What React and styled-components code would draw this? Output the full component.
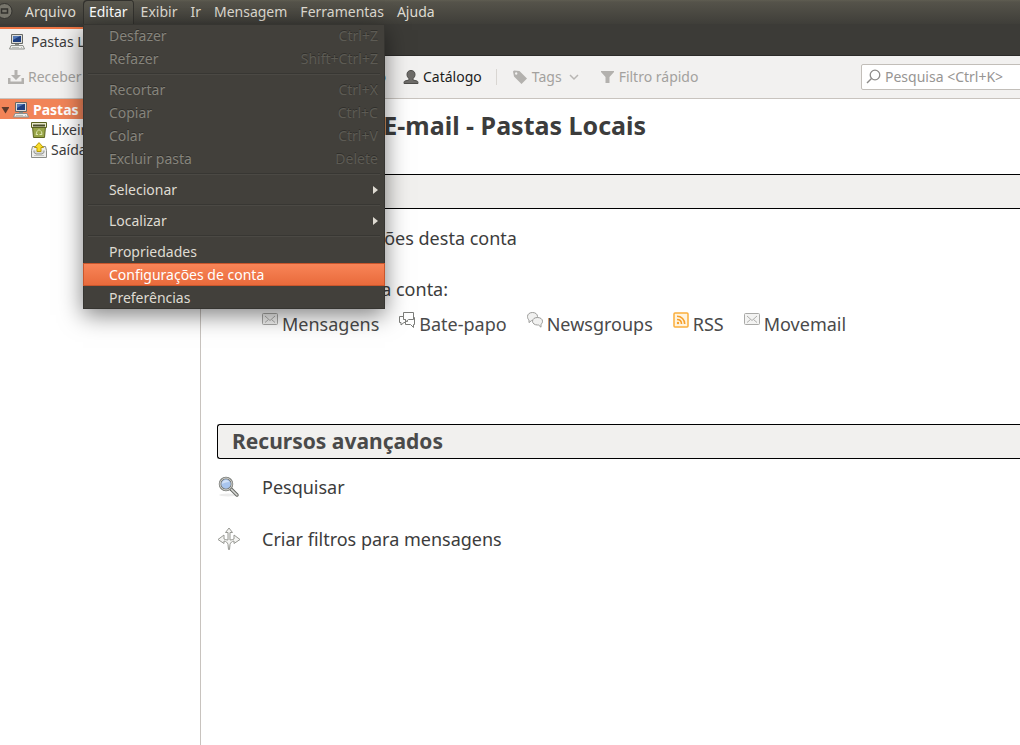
import React from 'react';
import styled, { createGlobalStyle, css } from 'styled-components';

const GlobalStyle = createGlobalStyle`
	* {
		box-sizing: border-box;
	}

	body {
		margin: 0;
		background: #fff;
		color: #3c3c3c;
		font-family: 'Noto Sans', 'Open Sans', sans-serif;
		font-size: 14px;
		line-height: 20px;
	}

	button,
	input {
		font: inherit;
		color: inherit;
	}

	svg {
		display: block;
		flex: none;
	}
`;

const Window = styled.div`
	display: flex;
	flex-direction: column;
	min-height: 100vh;
	overflow: hidden;
`;

const plainButton = css`
	display: flex;
	align-items: center;
	padding: 0;
	border: 0;
	background: none;
	white-space: nowrap;
`;

const MenuBar = styled.nav`
	display: flex;
	gap: 1px;
	height: 24px;
	background: linear-gradient(#5f5d51, #55534a 2px, #3f3e39);
	color: #dfdbd2;
`;

const Restore = styled.button`
	${plainButton}
	width: 18px;
	overflow: hidden;
`;

const MenuHolder = styled.div`
	position: relative;
	display: flex;
`;

const MenuTitle = styled.button`
	${plainButton}
	padding: 0 6px;

	${props =>
		props.$open &&
		css`
			border-radius: 4px 4px 0 0;
			background: linear-gradient(#5b594f, #45443e);
			box-shadow: inset 1px 1px #33322e, inset -1px 0 #33322e;
			color: #fff;
		`}
`;

const Menu = styled.div`
	position: absolute;
	z-index: 1;
	top: 24px;
	left: 0;
	width: 302px;
	background: #42403b;
	box-shadow: inset 0 0 0 1px #363531, 0 6px 22px rgba(0, 0, 0, 0.5);
`;

const MenuItem = styled.button`
	${plainButton}
	justify-content: space-between;
	width: 100%;
	height: 23px;
	padding: 0 7px 0 26px;
	color: #dfdbd2;

	&:disabled {
		color: #86847c;
		text-shadow: 0 -1px #302f2b;
	}

	${props =>
		props.$active &&
		css`
			background: linear-gradient(#f98659, #e8693a);
			box-shadow: inset 0 0 0 1px #c9562c;
			color: #fff;
		`}
`;

const Shortcut = styled.span`
	color: #5d5b54;
`;

const Arrow = styled.span`
	border: 4px solid transparent;
	border-right: 0;
	border-left: 5px solid #dfdbd2;
`;

const Separator = styled.hr`
	height: 8px;
	margin: 0 5px;
	border: 0;
	background: linear-gradient(#383733, #383733) 0 3px / 100% 1px no-repeat,
		linear-gradient(#4b4944, #4b4944) 0 4px / 100% 1px no-repeat;
`;

const TabStrip = styled.div`
	display: flex;
	height: 32px;
	padding-top: 3px;
	background: #3c3b37;
	box-shadow: inset 0 -1px #2c2b29;
`;

const Tab = styled.button`
	${plainButton}
	gap: 6px;
	width: 200px;
	padding: 0 9px 2px;
	border-top: 2px solid #f07746;
	background: #f2f1f0;
`;

const Toolbar = styled.div`
	display: flex;
	align-items: center;
	height: 43px;
	padding-left: 8px;
	border-bottom: 1px solid #c8c3be;
	background: #f2f1f0;
`;

const ToolButton = styled.button`
	${plainButton}
	gap: 4px;
	color: #1c1c1c;

	&:disabled {
		color: #a3a19e;
	}
`;

const MailTools = styled.div`
	display: flex;
	justify-content: space-between;
	width: 378px;
	margin-right: 17px;
`;

const TagTools = styled.div`
	display: flex;
	gap: 20px;
`;

const Divider = styled.span`
	width: 1px;
	height: 16px;
	margin: 0 15px 0 14px;
	background: #d9d6d2;
`;

const Search = styled.label`
	display: flex;
	align-items: center;
	gap: 4px;
	width: 164px;
	height: 26px;
	margin-left: auto;
	margin-right: -5px;
	padding-left: 4px;
	border: 1px solid #c2beb9;
	border-radius: 2px;
	background: #fff;

	input {
		flex: 1;
		min-width: 0;
		padding: 0;
		border: 0;
		outline: 0;
		background: none;
	}

	input::placeholder {
		color: #979593;
		opacity: 1;
	}
`;

const Body = styled.div`
	display: flex;
	flex: 1;
`;

const Folders = styled.aside`
	width: 201px;
	border-right: 1px solid #c8c3be;
`;

const Folder = styled.button`
	${plainButton}
	gap: 4px;
	width: 100%;
	height: 20px;
	padding-top: 2px;
	padding-left: ${props => (props.$root ? 0 : 31)}px;
	background: ${props => (props.$root ? '#f18458' : 'none')};
	color: ${props => (props.$root ? '#fff' : 'inherit')};
	font-weight: ${props => (props.$root ? 700 : 400)};
`;

const Content = styled.main`
	flex: 1;
	min-width: 0;
	padding: 10px 0 0 16px;
	font-size: 18px;
	line-height: 24px;
`;

const Title = styled.h1`
	margin: 0 0 33px;
	padding-left: 5px;
	font-size: 25px;
	line-height: 32px;
	white-space: nowrap;
`;

const Section = styled.section`
	margin-bottom: 88px;
`;

const SectionTitle = styled.h2`
	height: 35px;
	margin: 0;
	padding-left: 14px;
	border: 1px solid #000;
	border-right: 0;
	border-radius: 3px 0 0 3px;
	background: #f1f0ee;
	color: #4a4a4a;
	font-size: 21px;
	line-height: 32px;
`;

const Action = styled.a`
	display: grid;
	grid-template-columns: 45px auto;
	align-items: center;
	justify-content: start;
	margin-top: ${props => props.$space}px;
	color: inherit;
	text-decoration: none;
	white-space: nowrap;
`;

const Label = styled.p`
	margin: 27px 0 0 45px;
`;

const AccountTypes = styled.div`
	display: flex;
	gap: 20px;
	margin: 11px 0 0 45px;
`;

const AccountLink = styled.a`
	display: flex;
	gap: 4px;
	color: #4a4a4a;
	text-decoration: none;
`;

const ComputerIcon = () => (
	<svg width="16" height="16" viewBox="0 0 16 16">
		<path d="M2.500.5h11v9h-11z" fill="#dcdcd8" stroke="#666864" />
		<path d="M4 2h8v6H4z" fill="#1f3f80" />
		<path d="M4 2h7L4 6z" fill="#5478b5" />
		<path d="M6 10h4v1H6z" fill="#888a85" />
		<path d="M2 11.500h12l1.500 3.500H.5z" fill="#eeeeec" stroke="#8d8f8a" />
		<path d="M3 13.500h7M12 13.500h1" stroke="#babdb6" />
	</svg>
);

const TrashIcon = () => (
	<svg width="16" height="16" viewBox="0 0 16 16">
		<path d="M1.500 4.500h13l-1 11h-11z" fill="#98a548" stroke="#5b6320" />
		<path d="M.5.500h15v5H.5z" fill="#e7e8c9" stroke="#5b6320" />
		<path d="M2 3.500h12" stroke="#4a4f2b" strokeWidth="2" />
		<path d="M6 9.500l2-2 2 2M10.500 9.500l.5 3H8.500M7 12.500H5l1-3" fill="none" stroke="#dfe6b0" />
	</svg>
);

const OutboxIcon = () => (
	<svg width="16" height="16" viewBox="0 0 16 16">
		<path d="M1.500 4.500h13l1 4v7H.5v-7z" fill="#eeeeec" stroke="#8b8d88" />
		<path d="M3 8.500v2l2 1.500h6l2-1.500v-2" fill="#d6d7d3" stroke="#8f918c" />
		<path d="M3 13.500h10" stroke="#c5c7c2" />
		<path d="M8 .6l4.500 4.900h-2.500v4H6v-4H3.500z" fill="#f8dc2c" stroke="#b99b05" />
	</svg>
);

const ReceiveIcon = () => (
	<svg width="16" height="16" viewBox="0 0 16 16" fill="#b3b1ae">
		<path d="M6.500 1h3v5H13l-5 5-5-5h3.500z" />
		<path d="M0 9h2.500v3.500h11V9H16v6H0z" />
	</svg>
);

const PersonIcon = () => (
	<svg width="16" height="16" viewBox="0 0 16 16">
		<path
			d="M8 1.500c2.500 0 4 1.500 4 4 0 1.800-.8 3.200-2 4v1.500l4 1c.8.300 1 .8 1 2.500H1c0-1.700.2-2.200 1-2.500l4-1V9.500c-1.200-.8-2-2.200-2-4 0-2.500 1.500-4 4-4z"
			fill="#6e6c69"
			stroke="#4e4d4a"
		/>
	</svg>
);

const TagIcon = () => (
	<svg width="16" height="16" viewBox="0 0 16 16">
		<path
			d="M1 2.500L2 1.500l5.500.5L15 9.500 9.500 15 2 7.500zM3 4.500a1.200 1.200 0 1 0 2.400 0 1.200 1.200 0 1 0-2.400 0z"
			fill="#b3b1ae"
			fillRule="evenodd"
		/>
	</svg>
);

const ChevronIcon = () => (
	<svg width="14" height="10" viewBox="0 0 14 10">
		<path d="M4 3l4 4 4-4" fill="none" stroke="#b8b6b3" strokeWidth="1.500" />
	</svg>
);

const FunnelIcon = () => (
	<svg width="15" height="16" viewBox="0 0 15 16">
		<path d="M1 2h13v1L9.500 8v6h-4V8L1 3z" fill="#b3b1ae" />
	</svg>
);

const LensIcon = () => (
	<svg width="15" height="16" viewBox="0 0 15 16" fill="none" stroke="#8d8b89">
		<circle cx="9" cy="6" r="4.800" strokeWidth="1.300" />
		<path d="M5.500 9.500L1 14" strokeWidth="1.500" />
	</svg>
);

const EnvelopeIcon = () => (
	<svg width="16" height="14" viewBox="0 0 16 14">
		<rect x=".5" y="1.500" width="15" height="11" rx="1" fill="#f3f3f2" stroke="#a9a9a7" />
		<path d="M3 4l5 4.500L13 4M3 10.500L6.500 7.500M13 10.500L9.500 7.500" fill="none" stroke="#aeaeac" />
	</svg>
);

const ChatIcon = () => (
	<svg width="16" height="16" viewBox="0 0 16 16" fill="#fff" stroke="#7b7c79">
		<path d="M8.500 5.500h7v7h-1v3l-3-3h-5v-3h2z" />
		<path d="M4.500.5h10v7h-5l-3 2.500V7.500h-2z" />
		<path d="M4.500 4.500h-4v6h1.500v2.500l3-2.500h1.500V7.500h-2z" />
	</svg>
);

const NewsIcon = () => (
	<svg width="16" height="16" viewBox="0 0 16 16" fill="#f1f1f0" stroke="#9b9b99">
		<path d="M5.500.5c3 0 5 1.700 5 4s-2 4-5 4l-1 .1-2.500 2V8C.9 7.200.5 5.800.5 4.500c0-2.300 2-4 5-4z" />
		<path d="M10.500 5.500c3 0 5 1.600 5 3.700 0 1.400-.5 2.400-1.500 3v3l-2.500-2.200h-1c-3 0-5-1.600-5-3.800s2-3.700 5-3.700z" />
	</svg>
);

const RssIcon = () => (
	<svg width="16" height="16" viewBox="0 0 16 16">
		<rect x="1" y="1" width="14" height="14" rx="1" fill="#fff4df" stroke="#fbae3c" strokeWidth="1.500" />
		<g fill="none" stroke="#f7a02b" strokeWidth="1.600">
			<path d="M4 4.300c4.500 0 7.700 3.200 7.700 7.700M4 7.500c2.800 0 4.500 1.700 4.500 4.500" />
		</g>
		<circle cx="5" cy="11" r="1.200" fill="#f7a02b" />
	</svg>
);

const MagnifierIcon = () => (
	<svg width="24" height="24" viewBox="0 0 24 24">
		<ellipse cx="11" cy="20" rx="9" ry="1.500" fill="#ececec" />
		<path d="M14 14l6 6" stroke="#666864" strokeWidth="3.500" strokeLinecap="round" />
		<path d="M14 14l6 6" stroke="#d9dad7" strokeWidth="1.500" strokeLinecap="round" />
		<circle cx="9" cy="9" r="6" fill="#a9c5ee" stroke="#777975" strokeWidth="2.500" />
		<circle cx="9" cy="9" r="6" fill="none" stroke="#d6d7d4" />
		<path d="M5 9c0-3 2-4 4-4 1.500 0 3 1 3.500 2C9 7 7 8 5 9z" fill="#d2e1f7" />
	</svg>
);

const FilterIcon = () => (
	<svg width="24" height="24" viewBox="0 0 24 24">
		<path
			d="M12 1l3.500 4.500H13V13c1.500 0 3-.5 4-1V8l6 4.500-6 4V14c-2 .3-3.500 1.500-4 3.500l-.5 5h-1l-.5-5c-.5-2-2-3.200-4-3.500v2.500l-6-4L7 8v4c1 .5 2.500 1 4 1V5.500H8.500z"
			fill="#f4f4f2"
			stroke="#989994"
		/>
	</svg>
);

const RestoreIcon = () => (
	<svg width="14" height="18" viewBox="0 0 14 18">
		<circle cx="4.500" cy="8" r="7.500" fill="#77756b" stroke="#34332f" />
		<path d="M1.500 6h6v4h-6z" fill="none" stroke="#33322e" strokeWidth="1.500" />
	</svg>
);

const TwistyIcon = () => (
	<svg width="9" height="8" viewBox="0 0 9 8">
		<path d="M1.500 1h8L5.500 7.500z" fill="#5c3a2c" />
	</svg>
);

const editMenu = [
	{ label: 'Desfazer', shortcut: 'Ctrl+Z', disabled: true },
	{ label: 'Refazer', shortcut: 'Shift+Ctrl+Z', disabled: true },
	null,
	{ label: 'Recortar', shortcut: 'Ctrl+X', disabled: true },
	{ label: 'Copiar', shortcut: 'Ctrl+C', disabled: true },
	{ label: 'Colar', shortcut: 'Ctrl+V', disabled: true },
	{ label: 'Excluir pasta', shortcut: 'Delete', disabled: true },
	null,
	{ label: 'Selecionar', submenu: true },
	null,
	{ label: 'Localizar', submenu: true },
	null,
	{ label: 'Propriedades' },
	{ label: 'Configurações de conta', active: true },
	{ label: 'Preferências' },
];

const menus = ['Arquivo', 'Editar', 'Exibir', 'Ir', 'Mensagem', 'Ferramentas', 'Ajuda'];

const accountTypes = [
	{ label: 'Mensagens', Icon: EnvelopeIcon },
	{ label: 'Bate-papo', Icon: ChatIcon },
	{ label: 'Newsgroups', Icon: NewsIcon },
	{ label: 'RSS', Icon: RssIcon },
	{ label: 'Movemail', Icon: EnvelopeIcon },
];

const EditMenu = () => (
	<Menu role="menu">
		{editMenu.map((item, i) =>
			item ? (
				<MenuItem key={item.label} role="menuitem" disabled={item.disabled} $active={item.active}>
					{item.label}
					{item.shortcut && <Shortcut>{item.shortcut}</Shortcut>}
					{item.submenu && <Arrow />}
				</MenuItem>
			) : (
				<Separator key={i} />
			)
		)}
	</Menu>
);

const App = () => (
	<Window>
		<GlobalStyle />
		<MenuBar>
			<Restore aria-label="Restaurar">
				<RestoreIcon />
			</Restore>
			{menus.map(name => (
				<MenuHolder key={name}>
					<MenuTitle $open={name === 'Editar'}>{name}</MenuTitle>
					{name === 'Editar' && <EditMenu />}
				</MenuHolder>
			))}
		</MenuBar>
		<TabStrip>
			<Tab>
				<ComputerIcon />
				Pastas Locais
			</Tab>
		</TabStrip>
		<Toolbar>
			<MailTools>
				<ToolButton disabled>
					<ReceiveIcon />
					Receber
				</ToolButton>
				<ToolButton>Bate-papo</ToolButton>
			</MailTools>
			<ToolButton>
				<PersonIcon />
				Catálogo
			</ToolButton>
			<Divider />
			<TagTools>
				<ToolButton disabled>
					<TagIcon />
					Tags
					<ChevronIcon />
				</ToolButton>
				<ToolButton disabled>
					<FunnelIcon />
					Filtro rápido
				</ToolButton>
			</TagTools>
			<Search>
				<LensIcon />
				<input type="text" aria-label="Pesquisa" placeholder="Pesquisa <Ctrl+K>" />
			</Search>
		</Toolbar>
		<Body>
			<Folders>
				<Folder $root>
					<TwistyIcon />
					<ComputerIcon />
					Pastas Locais
				</Folder>
				<Folder>
					<TrashIcon />
					Lixeira
				</Folder>
				<Folder>
					<OutboxIcon />
					Saída
				</Folder>
			</Folders>
			<Content>
				<Title>Thunderbird E-mail - Pastas Locais</Title>
				<Section>
					<SectionTitle>Contas</SectionTitle>
					<Action href="#" $space={17}>
						<span />
						Ver configurações desta conta
					</Action>
					<Label>Criar uma nova conta:</Label>
					<AccountTypes>
						{accountTypes.map(({ label, Icon }) => (
							<AccountLink key={label} href="#">
								<Icon />
								{label}
							</AccountLink>
						))}
					</AccountTypes>
				</Section>
				<Section>
					<SectionTitle>Recursos avançados</SectionTitle>
					<Action href="#" $space={16}>
						<MagnifierIcon />
						Pesquisar
					</Action>
					<Action href="#" $space={28}>
						<FilterIcon />
						Criar filtros para mensagens
					</Action>
				</Section>
			</Content>
		</Body>
	</Window>
);

export default App;
